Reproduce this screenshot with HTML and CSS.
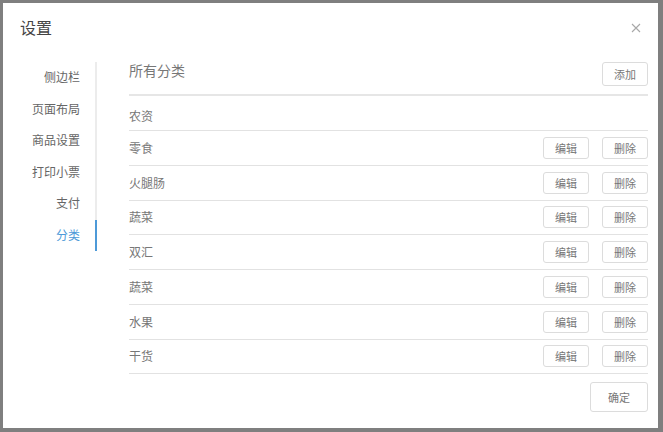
FILE: index.html
```html
<!DOCTYPE html>
<html lang="zh">
<head>
<meta charset="utf-8">
<link rel="stylesheet" href="styles.css">
</head>
<body>
<div class="modal">
  <div class="modal-header">
    <span class="modal-title">设置</span>
    <span class="close">
      <svg width="10" height="10" viewBox="0 0 10 10"><path d="M1 1L9 9M9 1L1 9" stroke="#a8a8a8" stroke-width="1.1" fill="none"/></svg>
    </span>
  </div>
  <div class="modal-body">
    <ul class="side">
      <li>侧边栏</li>
      <li>页面布局</li>
      <li>商品设置</li>
      <li>打印小票</li>
      <li>支付</li>
      <li class="active">分类</li>
    </ul>
    <div class="content">
      <div class="content-head">
        <span class="content-title">所有分类</span>
        <button class="btn">添加</button>
      </div>
      <div class="row first"><span class="name">农资</span></div>
      <div class="row"><span class="name">零食</span><div class="ops"><button class="btn">编辑</button><button class="btn">删除</button></div></div>
      <div class="row"><span class="name">火腿肠</span><div class="ops"><button class="btn">编辑</button><button class="btn">删除</button></div></div>
      <div class="row"><span class="name">蔬菜</span><div class="ops"><button class="btn">编辑</button><button class="btn">删除</button></div></div>
      <div class="row"><span class="name">双汇</span><div class="ops"><button class="btn">编辑</button><button class="btn">删除</button></div></div>
      <div class="row"><span class="name">蔬菜</span><div class="ops"><button class="btn">编辑</button><button class="btn">删除</button></div></div>
      <div class="row"><span class="name">水果</span><div class="ops"><button class="btn">编辑</button><button class="btn">删除</button></div></div>
      <div class="row"><span class="name">干货</span><div class="ops"><button class="btn">编辑</button><button class="btn">删除</button></div></div>
      <div class="footer"><button class="btn btn-lg">确定</button></div>
    </div>
  </div>
</div>
</body>
</html>
```
FILE: styles.css
```css
* { box-sizing: border-box; }
html, body { margin: 0; height: 100%; }
body {
  background: #7f7f7f;
  padding: 3px 5px 4px 3px;
  font-family: "Noto Sans CJK SC", "Noto Sans", sans-serif;
  color: #777;
  overflow: hidden;
}
.modal {
  background: #fff;
  width: 655px;
  height: 425px;
  display: flex;
  flex-direction: column;
}
.modal-header {
  height: 59px;
  display: flex;
  justify-content: space-between;
  align-items: flex-start;
  padding: 13px 17px 0 17px;
}
.modal-title {
  font-size: 16px;
  line-height: 22px;
  color: #444;
}
.close {
  display: flex;
  padding-top: 7px;
}
.modal-body {
  display: flex;
  flex: 1;
}
.side {
  list-style: none;
  margin: 0;
  padding: 0;
  width: 94px;
  border-right: 2px solid #ececec;
  align-self: flex-start;
}
.side li {
  height: 31.5px;
  line-height: 30px;
  text-align: right;
  padding-right: 15px;
  font-size: 12px;
  color: #666;
  margin-right: -2px;
  border-right: 2px solid transparent;
}
.side li.active {
  color: #4d9ad8;
  border-right-color: #4d9ad8;
}
.content {
  flex: 1;
  margin-left: 32px;
  margin-right: 10px;
  display: flex;
  flex-direction: column;
}
.content-head {
  height: 34px;
  display: flex;
  justify-content: space-between;
  align-items: flex-start;
  border-bottom: 2px solid #e6e6e6;
}
.content-title {
  font-size: 14px;
  line-height: 16px;
  color: #777;
}
.row {
  height: 34.75px;
  display: flex;
  justify-content: space-between;
  align-items: center;
  border-bottom: 1px solid #e2e2e2;
  font-size: 12px;
  color: #777;
}
.row .name { padding-bottom: 1px; }
.row.first { height: 35px; padding-top: 5px; }
.ops {
  display: flex;
  gap: 13px;
}
.btn {
  font-family: inherit;
  font-size: 11px;
  color: #777;
  background: #fff;
  border: 1px solid #dcdcdc;
  border-radius: 3px;
  width: 46px;
  height: 24px;
  padding: 0;
  line-height: 22px;
}
.ops .btn { height: 22px; line-height: 20px; }
.footer {
  display: flex;
  justify-content: flex-end;
  padding-top: 8px;
}
.btn-lg {
  width: 58px;
  height: 30px;
  line-height: 28px;
}
```
